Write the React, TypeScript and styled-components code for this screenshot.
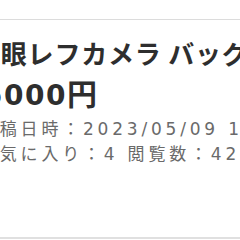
import React from "react";
import styled, { createGlobalStyle } from "styled-components";

const Global = createGlobalStyle`
  html, body { margin: 0; padding: 0; background: #ffffff; overflow: hidden; }
  body { width: 240px; height: 240px; }
`;

const Page = styled.div`
  width: 240px;
  height: 240px;
  overflow: hidden;
  background: #fff;
  padding-top: 19px;
  box-sizing: border-box;
`;

const Card = styled.div`
  border-top: 1px solid #dcdcdc;
  border-bottom: 2px solid #e0e0e0;
  margin-left: -26px;
  width: 480px;
  padding: 17px 0 70px;
  font-family: "Noto Sans CJK JP", "Noto Sans", sans-serif;
  white-space: nowrap;
`;

const Title = styled.div`
  font-size: 26px;
  line-height: 32px;
  font-weight: 700;
  letter-spacing: 0.8px;
  color: #2e2e2e;
`;

const Price = styled.div`
  font-family: "DejaVu Sans", "Noto Sans CJK JP", sans-serif;
  font-size: 28px;
  line-height: 36px;
  font-weight: 700;
  letter-spacing: 1.5px;
  color: #2e2e2e;
  margin-top: 5px;
  margin-left: -12px;
`;

const Unit = styled.span`
  font-family: "Noto Sans CJK JP", sans-serif;
  font-size: 30px;
  letter-spacing: 0;
`;

const MetaBlock = styled.div`
  margin-top: 3px;
  margin-left: 5px;
`;

const Meta = styled.div`
  font-family: "DejaVu Sans", "Noto Sans CJK JP", sans-serif;
  font-size: 17px;
  line-height: 25px;
  color: #6a6a6a;
  letter-spacing: 3.8px;
`;

export default function App() {
  return (
    <>
      <Global />
      <Page>
        <Card>
          <Title>一眼レフカメラ バッグ ショルダー</Title>
          <Price>
            15000<Unit>円</Unit>
          </Price>
          <MetaBlock>
            <Meta>投稿日時：2023/05/09 12:34</Meta>
            <Meta>お気に入り：4 閲覧数：42</Meta>
          </MetaBlock>
        </Card>
      </Page>
    </>
  );
}
